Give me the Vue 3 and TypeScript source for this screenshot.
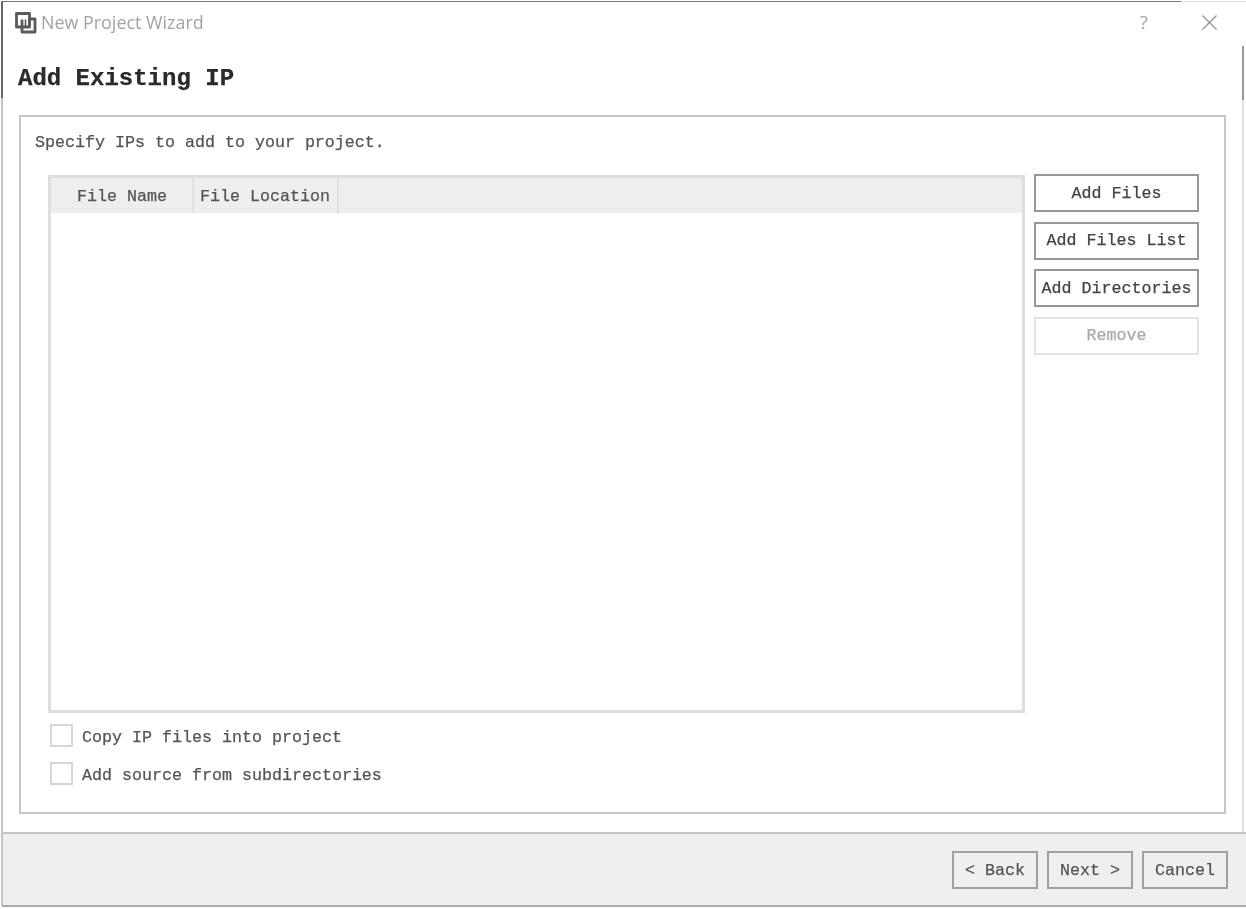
<script setup lang="ts">
import { ref } from 'vue'

interface SideButton {
  label: string
  disabled?: boolean
}

const sideButtons: SideButton[] = [
  { label: 'Add Files' },
  { label: 'Add Files List' },
  { label: 'Add Directories' },
  { label: 'Remove', disabled: true }
]

const options = ref([
  { label: 'Copy IP files into project', checked: false },
  { label: 'Add source from subdirectories', checked: false }
])
</script>

<template>
  <div class="window">
    <i class="frame-right"></i>

    <div class="titlebar">
      <svg class="logo" width="24" height="24" viewBox="0 0 24 24" fill="none" stroke="#5a5a5a" stroke-width="2.8" stroke-linejoin="round">
        <path d="M2.5 2.5h13v13.5h-13z" />
        <path d="M8 8.5v12.5h13V8h-5.5v7" />
        <path d="M11.5 8.5v8" stroke-width="1.6" />
      </svg>
      <span class="title">New Project Wizard</span>
      <span class="help">?</span>
      <svg class="close" width="15" height="15" viewBox="0 0 15 15" stroke="#8f8f8f" stroke-width="1.2">
        <path d="M.5.5l14 14M14.5.5l-14 14" />
      </svg>
    </div>

    <h1 class="heading">Add Existing IP</h1>

    <section class="panel">
      <p class="intro">Specify IPs to add to your project.</p>

      <div class="content">
        <div class="left">
          <div class="table">
            <div class="table-head">
              <div class="col col-name">File Name</div>
              <div class="col col-location">File Location</div>
            </div>
          </div>

          <label v-for="opt in options" :key="opt.label" class="option">
            <input v-model="opt.checked" type="checkbox" />
            <span>{{ opt.label }}</span>
          </label>
        </div>

        <div class="side">
          <button v-for="btn in sideButtons" :key="btn.label" class="btn" :disabled="btn.disabled">
            {{ btn.label }}
          </button>
        </div>
      </div>
    </section>

    <footer class="footer">
      <button class="btn foot-btn">&lt; Back</button>
      <button class="btn foot-btn">Next &gt;</button>
      <button class="btn foot-btn">Cancel</button>
    </footer>
  </div>
</template>

<style>
html,
body {
  margin: 0;
  background: #fff;
}
</style>

<style scoped>
.window {
  position: relative;
  box-sizing: border-box;
  width: 1246px;
  height: 909px;
  padding: 1px 0 2px 2px;
  display: flex;
  flex-direction: column;
  background: #fff;
  font-family: 'Liberation Mono', monospace;
  font-size: 16.67px;
  color: #444;
  -webkit-text-stroke: 0.25px currentColor;
  filter: blur(0.5px);
}

.window::before {
  content: '';
  position: absolute;
  left: 1px;
  top: 1px;
  width: 2px;
  height: 905px;
  background: linear-gradient(#666 0, #666 97px, #c4c4c4 97px, #c4c4c4 100%);
}

.window::after {
  content: '';
  position: absolute;
  left: 1px;
  right: 0;
  top: 1px;
  height: 1px;
  background: linear-gradient(90deg, #777 0, #777 1180px, #ddd 1180px, #ddd 100%);
}

.frame-right {
  position: absolute;
  right: 2px;
  top: 46px;
  width: 2px;
  height: 786px;
  background: linear-gradient(#999 0, #999 54px, #e2e2e2 54px, #e2e2e2 100%);
}

.titlebar {
  height: 44px;
  display: flex;
  align-items: center;
  flex-shrink: 0;
  padding-left: 12px;
}

.logo {
  flex-shrink: 0;
  margin-top: -1px;
}

.title {
  margin-left: 3px;
  margin-top: -2px;
  font-family: 'Open Sans', sans-serif;
  font-size: 17.9px;
  color: #a2a2a2;
  -webkit-text-stroke: 0;
}

.help {
  margin-left: auto;
  margin-top: -3px;
  font-family: 'Open Sans', sans-serif;
  font-size: 19px;
  color: #a5a5a5;
  -webkit-text-stroke: 0;
}

.close {
  margin-left: 54px;
  margin-right: 29px;
  margin-top: -2px;
}

.heading {
  margin: 0;
  height: 70px;
  padding: 20px 0 0 16px;
  box-sizing: border-box;
  flex-shrink: 0;
  font-size: 24px;
  line-height: 27px;
  font-weight: 700;
  color: #2a2a2a;
}

.panel {
  box-sizing: border-box;
  height: 699px;
  margin: 0 20px 0 17px;
  padding: 16px 25px 0 14px;
  flex-shrink: 0;
  border: 2px solid #c6c6c6;
}

.intro {
  margin: 0;
  line-height: 19px;
  color: #555;
}

.content {
  margin-top: 22px;
  display: flex;
  gap: 9px;
}

.left {
  width: 977px;
  margin-left: 13px;
  flex-shrink: 0;
}

.table {
  box-sizing: border-box;
  height: 538px;
  margin-top: 1px;
  border: 3px solid #dedede;
}

.table-head {
  height: 35px;
  display: flex;
  background: #eee;
}

.col {
  box-sizing: border-box;
  line-height: 37px;
  border-right: 2px solid #e2e2e2;
  color: #555;
}

.col-name {
  width: 143px;
  padding-left: 26px;
}

.col-location {
  width: 145px;
  padding-left: 6px;
}

.option {
  height: 23px;
  margin: 11px 0 0 2px;
  display: flex;
  align-items: center;
  gap: 9px;
  color: #555;
}

.option + .option {
  margin-top: 15px;
}

.option span {
  padding-top: 4px;
}

.option input {
  appearance: none;
  box-sizing: border-box;
  width: 23px;
  height: 23px;
  margin: 0;
  border: 2px solid #d6d6d6;
  background: #fff;
}

.option input:checked {
  background: #777;
}

.side {
  width: 165px;
  display: flex;
  flex-direction: column;
  gap: 9.5px;
}

.btn {
  box-sizing: border-box;
  height: 38px;
  padding: 0;
  border: 2px solid #979797;
  background: #fff;
  font-family: inherit;
  font-size: inherit;
  color: #444;
}

.btn:disabled {
  border-color: #e4e4e4;
  color: #aaa;
}

.footer {
  flex: 1;
  margin-top: 18px;
  padding: 17px 18px 0 0;
  display: flex;
  justify-content: flex-end;
  align-items: flex-start;
  gap: 9px;
  border-top: 2px solid #c4c4c4;
  border-bottom: 2px solid #aaa;
  background: #efefef;
}

.foot-btn {
  width: 86px;
  background: #efefef;
  border-color: #a0a0a0;
  color: #555;
}
</style>
